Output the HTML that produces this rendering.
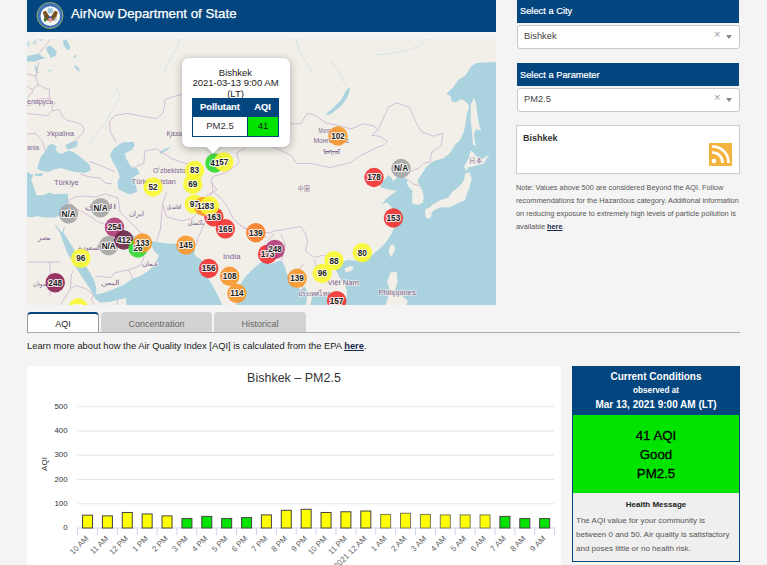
<!DOCTYPE html>
<html><head><meta charset="utf-8">
<style>
*{box-sizing:border-box;margin:0;padding:0}
html,body{width:767px;height:565px;overflow:hidden;background:#f4f4f4;font-family:"Liberation Sans",sans-serif;position:relative}
.abs{position:absolute}
#hdr{left:27px;top:0;width:469px;height:32px;background:#03467f}
#hdr .t{left:44px;top:5.5px;color:#fff;font-size:13.3px;-webkit-text-stroke:0.25px #fff;white-space:nowrap}
#map{left:27px;top:39px;width:469px;height:266px;background:#f2efe9;overflow:hidden}
.ph{left:517px;width:222px;height:23px;background:#03467f;color:#fff;font-size:9.3px;padding:6px 0 0 3px;-webkit-text-stroke:0.2px #fff}
.sel{left:517px;width:223px;height:24px;background:#fff;border:1px solid #c8c8c8;border-radius:3px;font-size:9.3px;color:#444;padding:5px 0 0 6px}
.sel .x{position:absolute;left:196px;top:2px;color:#999;font-size:11px}
.sel .ar{position:absolute;left:208px;top:8.5px;width:0;height:0;border-left:3.5px solid transparent;border-right:3.5px solid transparent;border-top:4px solid #888}
#rss{left:516px;top:125px;width:224px;height:49px;background:#fff;border:1px solid #ccc}
#note{left:516px;top:181px;width:230px;font-size:7.35px;line-height:13px;color:#555}
#note a{color:#1a2a50;font-weight:bold;text-decoration:underline}
.tab{top:312px;height:21px;border-radius:4px 4px 0 0;font-size:9px;text-align:center;padding-top:6px}
#tabline{left:27px;top:332px;width:713px;height:1px;background:#aaa}
#learn{left:27px;top:340.6px;font-size:9.35px;color:#222;white-space:nowrap}
#learn a{color:#1a2a50;text-decoration:underline;font-weight:bold}
#chart{left:27px;top:366px;width:534px;height:199px;background:#fff}
#cc{left:572px;top:366px;width:168px;height:196px;border:1px solid #03467f;border-top:none;background:#efefef}
</style></head><body>
<div id="hdr" class="abs">
  <svg class="abs" style="left:9px;top:2px" width="28" height="28" viewBox="0 0 28 28">
    <circle cx="14" cy="13.5" r="13" fill="#3f72b8" stroke="#a9b35a" stroke-width="0.9"/>
    <circle cx="14.3" cy="14" r="9.8" fill="#f8f8f4"/>
    <circle cx="14.3" cy="8.8" r="2.8" fill="#9fc6d8"/>
    <path d="M6.8 10 L9.8 8.8 L13.5 14.5 L12.8 19 L9 17.5 Z" fill="#7a4f22"/>
    <path d="M21.8 10 L18.8 8.8 L15.1 14.5 L15.8 19 L19.6 17.5 Z" fill="#7a4f22"/>
    <rect x="12.3" y="14.5" width="4" height="1.8" fill="#2f55a0"/>
    <rect x="12.3" y="16.3" width="4" height="3" fill="#ea8c90"/>
    <ellipse cx="9.2" cy="17.5" rx="1.4" ry="2.2" fill="#3d7a3a"/>
    <ellipse cx="19.5" cy="17.5" rx="1.3" ry="2" fill="#c8c8c0"/>
    <rect x="13" y="19.5" width="2.6" height="1.5" fill="#c9c9c4"/>
  </svg>
  <div class="abs t">AirNow Department of State</div>
</div>
<div id="map" class="abs"><!--MAP--><svg class="abs" style="left:0;top:0" width="469" height="266" viewBox="27 39 469 266"><path d="M27.0 56.1 L31.8 54.9 L39.0 53.7 L42.9 56.9 L46.5 58.1 L42.1 58.9 L38.2 60.1 L35.0 61.7 L30.2 61.3 L27.0 62.1Z" fill="#aad3df" /><path d="M376.0 55.0 L392.0 53.3 L407.9 50.2 L420.6 45.4 L425.4 39.0" fill="none" stroke="#aad3df" stroke-width="0.9" opacity="0.45"/><path d="M116.7 88.3 L120.9 96.7 L112.5 109.2 L106.3 121.7 L95.8 134.2 L89.6 142.6" fill="none" stroke="#aad3df" stroke-width="0.9" opacity="0.45"/><path d="M180.0 39.0 L176.0 50.0 L168.0 62.0 L164.0 72.0" fill="none" stroke="#aad3df" stroke-width="0.9" opacity="0.45"/><path d="M296.0 39.0 L300.0 52.0 L306.0 62.0 L312.0 72.0" fill="none" stroke="#aad3df" stroke-width="0.9" opacity="0.45"/><path d="M330.0 60.0 L338.0 70.0 L346.0 86.0" fill="none" stroke="#aad3df" stroke-width="0.9" opacity="0.45"/><g fill="#aad3df" opacity="0.55"><path d="M27.0 42.0 L29.0 41.0 L30.0 44.0 L28.0 47.0 L27.0 47.0Z" fill="#aad3df" /><path d="M33.0 41.0 L37.0 40.0 L36.0 44.0 L33.0 45.0Z" fill="#aad3df" /><path d="M38.0 39.0 L43.0 39.0 L41.0 42.0Z" fill="#aad3df" /></g><path d="M46.1 47.8 L49.3 45.4 L53.3 47.8 L56.9 52.5 L55.7 55.7 L52.5 56.9 L50.9 58.5 L49.3 54.9 L46.9 51.0Z" fill="#aad3df" /><path d="M62.9 40.6 L66.8 39.8 L68.4 43.8 L70.4 47.0 L68.4 50.6 L66.0 48.6 L63.7 45.4Z" fill="#aad3df" /><path d="M34.4 65.0 L36.0 65.5 L37.5 70.0 L38.5 73.0 L37.0 74.0 L35.5 71.0Z" fill="#aad3df" /><path d="M48.5 70.0 L50.5 69.5 L51.0 71.0 L49.0 71.5Z" fill="#aad3df" /><path d="M74.0 65.0 L76.5 66.0 L80.0 70.0 L79.0 71.5 L75.5 68.5Z" fill="#aad3df" /><path d="M74.0 55.0 L76.5 55.5 L76.0 57.5 L74.0 57.5Z" fill="#aad3df" /><path d="M37.6 166.5 L40.8 157.0 L45.1 151.7 L48.2 145.3 L52.5 143.7 L56.7 146.4 L55.7 150.1 L59.9 153.8 L64.2 152.7 L68.4 150.6 L72.7 151.7 L78.0 154.9 L83.3 159.6 L87.0 162.3 L90.0 166.0 L90.5 170.5 L84.4 173.0 L75.8 172.0 L69.5 170.8 L61.0 168.1 L53.5 169.7 L48.2 171.9 L40.8 170.8 L37.6 168.7Z" fill="#aad3df" /><path d="M65.2 145.3 L71.6 142.1 L78.0 141.1 L76.9 146.4 L71.6 148.5 L67.4 149.6Z" fill="#aad3df" /><path d="M34.4 174.0 L42.9 172.9 L41.9 176.1 L35.5 176.1Z" fill="#aad3df" /><path d="M27.0 172.0 L31.0 174.0 L33.4 175.0 L31.2 180.4 L33.4 185.7 L36.6 195.2 L42.9 194.9 L49.3 192.8 L54.6 194.3 L62.1 193.8 L67.9 193.8 L68.4 201.3 L67.4 207.6 L62.1 210.8 L58.9 216.1 L53.6 217.7 L42.9 217.2 L37.6 216.1 L32.3 217.2 L27.0 216.7Z" fill="#aad3df" /><path d="M109.9 154.8 L113.6 148.6 L122.3 142.4 L133.5 141.8 L134.7 144.9 L132.2 149.8 L124.8 153.6 L126.0 158.5 L131.6 167.2 L137.2 168.4 L139.7 173.4 L133.5 177.1 L135.9 185.8 L137.2 192.0 L129.8 194.5 L118.6 189.5 L117.4 182.1 L119.8 177.1 L117.4 169.7 L112.4 161.0Z" fill="#aad3df" /><path d="M64.2 225.7 L64.8 226.5 L63.5 232.7 L72.7 246.9 L78.3 256.8 L88.2 269.6 L93.9 279.5 L96.3 288.0 L96.3 294.4 L105.6 292.3 L116.1 288.1 L124.4 284.4 L131.7 279.2 L140.1 276.1 L148.4 270.9 L152.6 266.7 L157.8 258.3 L158.8 255.2 L154.7 252.1 L149.4 241.8 L152.0 241.0 L155.4 242.0 L169.1 243.4 L180.9 244.0 L194.5 247.0 L194.6 255.0 L201.5 260.1 L205.0 268.0 L208.4 279.1 L213.0 286.0 L218.8 297.5 L222.2 305.0 L126.5 305.0 L126.0 298.0 L121.3 299.1 L110.9 301.7 L100.4 302.7 L95.2 298.6 L89.7 288.0 L82.6 278.0 L75.5 266.7 L67.0 252.6 L59.9 232.7 L55.0 225.5 L55.6 224.8 L61.3 232.0 L62.5 232.0Z" fill="#aad3df" /><path d="M113.0 224.0 L120.0 226.0 L130.0 234.0 L140.0 238.0 L150.0 240.0 L152.0 244.0 L145.0 247.0 L138.0 246.0 L132.0 243.0 L125.0 238.0 L117.0 232.0 L112.0 228.0Z" fill="#aad3df" /><path d="M236.5 305.0 L238.1 291.9 L241.3 283.1 L245.3 276.7 L255.0 267.2 L260.0 263.0 L265.0 260.6 L270.0 264.2 L279.2 260.7 L282.7 261.9 L285.0 267.6 L287.3 274.5 L290.7 282.6 L296.5 287.2 L301.1 289.5 L304.8 286.5 L308.0 293.0 L306.7 299.6 L306.1 305.0Z" fill="#aad3df" /><path d="M310.6 305.0 L312.0 296.3 L317.8 294.3 L324.3 295.0 L327.6 297.0 L327.0 305.0Z" fill="#aad3df" /><path d="M496.0 62.1 L476.4 62.9 L471.6 66.1 L465.2 75.7 L458.1 80.0 L453.8 86.4 L446.4 93.8 L450.6 95.9 L451.7 101.3 L455.9 102.3 L461.3 99.1 L466.6 102.3 L469.2 106.6 L466.6 115.1 L465.5 124.6 L463.4 133.1 L460.2 140.0 L455.7 144.1 L449.3 153.7 L442.9 158.5 L436.0 160.3 L431.2 162.4 L425.9 167.7 L421.7 174.1 L417.4 180.5 L419.5 185.8 L422.7 191.1 L423.8 197.5 L422.7 202.8 L418.5 204.9 L412.1 203.8 L412.1 197.5 L412.6 191.1 L408.9 186.9 L406.8 183.7 L407.9 179.4 L403.6 177.3 L397.2 177.3 L393.0 181.5 L391.9 178.4 L388.7 175.2 L382.4 181.5 L380.2 186.9 L386.6 189.0 L397.2 191.1 L391.9 194.3 L385.6 199.6 L381.3 204.9 L386.5 202.2 L391.8 207.5 L393.2 211.5 L394.5 220.0 L394.5 227.4 L390.5 235.4 L385.0 243.4 L379.0 249.2 L372.1 255.0 L362.9 260.7 L353.7 260.7 L349.1 260.1 L343.4 261.3 L336.5 263.0 L335.9 269.9 L340.0 277.9 L344.5 283.7 L346.8 290.6 L346.8 296.3 L344.5 302.0 L343.4 305.0 L496.0 305.0Z" fill="#aad3df" /><path d="M470.8 104.4 L474.0 98.1 L476.1 103.4 L477.2 114.0 L479.3 125.7 L481.4 131.0 L476.1 128.9 L474.0 134.2 L474.5 140.0 L476.0 145.5 L473.0 145.0 L471.9 131.0 L470.8 120.4Z" fill="#f2efe9" /><path d="M470.9 150.0 L476.6 156.3 L482.3 159.2 L488.0 155.0 L490.0 153.0 L483.7 163.4 L479.4 164.8 L473.8 166.2 L468.1 167.6 L466.7 171.2 L463.9 166.2 L465.3 164.8 L468.1 159.2 L469.5 154.9Z" fill="#f2efe9" /><path d="M465.3 173.3 L469.5 172.6 L471.7 179.0 L469.5 187.5 L466.7 194.5 L465.3 200.2 L458.2 203.0 L449.7 207.3 L441.2 207.3 L434.2 210.1 L428.5 215.8 L427.1 210.1 L432.7 204.4 L439.8 200.2 L448.3 197.4 L452.6 191.7 L459.6 186.0 L463.9 180.4Z" fill="#f2efe9" /><path d="M425.7 208.7 L432.7 207.3 L431.3 215.8 L429.9 218.6 L425.7 217.2 L425.0 211.5Z" fill="#f2efe9" /><path d="M390.3 245.3 L394.3 244.5 L395.1 250.1 L391.1 257.2 L388.7 251.7Z" fill="#f2efe9" /><path d="M390.3 272.4 L396.7 271.6 L397.5 281.9 L395.1 289.9 L407.9 301.1 L406.3 305.0 L385.6 305.0 L390.3 291.5 L387.2 281.9Z" fill="#f2efe9" /><path d="M344.5 268.7 L350.3 265.9 L353.7 267.0 L351.4 271.0 L345.7 272.2Z" fill="#f2efe9" /><path d="M348.8 87.5 L350.0 89.0 L347.5 97.0 L341.5 105.5 L331.0 114.0 L326.5 115.2 L326.0 114.0 L332.0 109.0 L341.0 100.0 L346.5 90.0Z" fill="#aad3df" /><path d="M160.0 152.0 L165.0 149.0 L170.0 147.0 L169.0 149.0 L164.0 152.0 L160.0 154.0Z" fill="#aad3df" /><path d="M50.9 39.0 L45.0 46.0 L39.0 53.7" fill="none" stroke="#cfb9d2" stroke-width="0.9" stroke-linejoin="round"/><path d="M38.6 62.1 L36.9 72.4 L35.7 76.1 L27.0 73.6" fill="none" stroke="#cfb9d2" stroke-width="0.9" stroke-linejoin="round"/><path d="M35.7 76.1 L38.2 84.8 L32.0 89.7 L27.0 86.0" fill="none" stroke="#cfb9d2" stroke-width="0.9" stroke-linejoin="round"/><path d="M38.2 84.8 L43.1 87.3 L49.3 89.7 L49.3 96.0 L51.2 100.9 L55.5 103.4 L51.8 105.8 L52.4 110.8 L59.2 109.6 L62.9 117.0 L67.9 120.7 L74.1 122.0 L81.5 124.4 L84.0 129.4 L83.3 132.1 L77.1 138.4 L72.9 142.6 L70.0 146.0" fill="none" stroke="#cfb9d2" stroke-width="0.9" stroke-linejoin="round"/><path d="M27.0 113.3 L36.9 114.5 L47.4 115.8 L51.8 110.8" fill="none" stroke="#cfb9d2" stroke-width="0.9" stroke-linejoin="round"/><path d="M32.0 89.7 L32.6 92.2 L28.9 95.9 L27.0 98.0" fill="none" stroke="#cfb9d2" stroke-width="0.9" stroke-linejoin="round"/><path d="M27.0 134.2 L35.3 133.2 L41.6 140.5 L43.7 144.7 L45.0 151.0" fill="none" stroke="#cfb9d2" stroke-width="0.9" stroke-linejoin="round"/><path d="M27.0 106.0 L33.0 104.0 L36.0 100.0 L40.0 98.8 L50.0 98.8" fill="none" stroke="#cfb9d2" stroke-width="0.9" stroke-linejoin="round"/><path d="M116.7 142.6 L110.4 132.1 L109.4 121.7 L114.6 115.5 L127.1 113.4 L143.8 116.5 L156.3 118.6 L162.6 113.4 L164.7 105.0 L164.7 99.8 L173.0 96.7 L181.4 94.6 L183.0 94.0" fill="none" stroke="#cfb9d2" stroke-width="0.9" stroke-linejoin="round"/><path d="M133.4 167.6 L143.8 163.4 L144.9 150.9 L156.3 148.8 L173.0 159.3 L185.5 163.4 L195.0 165.0" fill="none" stroke="#cfb9d2" stroke-width="0.9" stroke-linejoin="round"/><path d="M89.6 161.4 L100.0 165.5 L110.4 169.7 L114.6 171.8" fill="none" stroke="#cfb9d2" stroke-width="0.9" stroke-linejoin="round"/><path d="M80.0 174.0 L90.0 177.0 L100.0 178.0 L105.0 183.0 L112.0 184.0" fill="none" stroke="#cfb9d2" stroke-width="0.9" stroke-linejoin="round"/><path d="M67.9 201.0 L75.0 197.0 L85.0 196.0 L95.0 197.0 L105.0 194.0 L112.0 196.0 L118.0 198.0" fill="none" stroke="#cfb9d2" stroke-width="0.9" stroke-linejoin="round"/><path d="M68.4 201.3 L75.0 208.0 L88.0 215.0 L98.0 222.0 L110.0 226.0" fill="none" stroke="#cfb9d2" stroke-width="0.9" stroke-linejoin="round"/><path d="M27.0 262.0 L60.0 262.0" fill="none" stroke="#cfb9d2" stroke-width="0.9" stroke-linejoin="round"/><path d="M50.0 262.0 L50.0 296.0" fill="none" stroke="#cfb9d2" stroke-width="0.9" stroke-linejoin="round"/><path d="M61.0 304.4 L70.4 288.8 L75.6 285.6 L86.1 288.8 L93.4 295.0 L91.3 299.2 L94.4 304.4" fill="none" stroke="#cfb9d2" stroke-width="0.9" stroke-linejoin="round"/><path d="M70.4 288.8 L71.5 274.2 L74.0 270.0" fill="none" stroke="#cfb9d2" stroke-width="0.9" stroke-linejoin="round"/><path d="M117.4 300.2 L117.4 305.0" fill="none" stroke="#cfb9d2" stroke-width="0.9" stroke-linejoin="round"/><path d="M245.6 147.8 L236.5 153.0 L239.1 162.2 L235.2 166.1 L226.1 172.6 L213.0 176.5 L210.4 181.7 L217.0 189.5 L207.8 194.8 L203.0 200.0" fill="none" stroke="#cfb9d2" stroke-width="0.9" stroke-linejoin="round"/><path d="M212.6 181.3 L212.6 191.7 L220.9 198.0 L227.2 206.3 L233.4 218.8 L236.6 222.0 L243.3 227.6 L252.1 230.9 L263.2 232.0 L269.8 233.1 L274.3 230.9 L283.1 229.8 L294.2 227.6 L300.8 226.5 L305.3 233.1 L307.5 242.0 L305.3 250.8 L314.1 257.5 L323.0 255.3 L332.0 258.0 L337.0 262.0" fill="none" stroke="#cfb9d2" stroke-width="0.9" stroke-linejoin="round"/><path d="M239.7 225.1 L254.3 233.4 L266.8 237.6" fill="none" stroke="#cfb9d2" stroke-width="0.9" stroke-linejoin="round"/><path d="M166.7 191.7 L162.5 204.2 L166.7 216.8 L181.3 220.9 L191.7 218.8 L202.1 208.4 L212.6 191.7" fill="none" stroke="#cfb9d2" stroke-width="0.9" stroke-linejoin="round"/><path d="M162.5 204.2 L160.4 229.3 L156.3 241.8" fill="none" stroke="#cfb9d2" stroke-width="0.9" stroke-linejoin="round"/><path d="M206.3 218.8 L202.1 229.3 L198.0 237.6 L195.9 246.0" fill="none" stroke="#cfb9d2" stroke-width="0.9" stroke-linejoin="round"/><path d="M290.4 123.8 L300.9 123.8 L307.1 113.4 L313.4 114.4 L319.6 118.6 L325.9 122.8 L340.5 125.9 L350.9 129.0 L363.4 123.8 L373.9 125.9 L378.0 130.1 L371.8 135.3 L380.1 136.3 L387.4 141.5" fill="none" stroke="#cfb9d2" stroke-width="0.9" stroke-linejoin="round"/><path d="M270.0 146.0 L275.6 147.8 L291.3 155.6 L296.5 163.5 L311.3 163.4 L330.1 167.6 L350.9 162.4 L361.4 155.1 L373.9 148.8 L384.3 144.7 L387.4 141.5" fill="none" stroke="#cfb9d2" stroke-width="0.9" stroke-linejoin="round"/><path d="M378.0 130.1 L388.5 107.1 L396.8 102.9 L409.3 107.1 L415.6 121.7 L421.8 132.1 L434.4 136.3 L442.9 133.0 L441.3 145.7 L431.8 152.1 L430.2 161.7 L423.8 163.2 L419.0 168.0 L407.9 172.8 L399.9 177.6" fill="none" stroke="#cfb9d2" stroke-width="0.9" stroke-linejoin="round"/><path d="M407.9 179.4 L413.0 184.0 L419.5 185.8" fill="none" stroke="#cfb9d2" stroke-width="0.9" stroke-linejoin="round"/><path d="M290.0 100.0 L282.0 110.0 L285.0 123.0 L290.4 123.8" fill="none" stroke="#cfb9d2" stroke-width="0.9" stroke-linejoin="round"/><path d="M266.5 242.0 L271.0 237.6 L274.3 234.0" fill="none" stroke="#cfb9d2" stroke-width="0.9" stroke-linejoin="round"/><path d="M280.9 234.2 L285.3 244.2 L283.1 255.3 L280.9 262.0" fill="none" stroke="#cfb9d2" stroke-width="0.9" stroke-linejoin="round"/><path d="M303.1 264.1 L296.4 273.0 L300.8 284.0 L304.0 290.0" fill="none" stroke="#cfb9d2" stroke-width="0.9" stroke-linejoin="round"/><path d="M314.1 259.7 L318.6 273.0 L329.6 284.0 L338.0 282.0" fill="none" stroke="#cfb9d2" stroke-width="0.9" stroke-linejoin="round"/><path d="M150.0 241.0 L140.0 232.0 L130.0 222.0 L120.0 212.0 L118.0 198.0" fill="none" stroke="#cfb9d2" stroke-width="0.9" stroke-linejoin="round"/><path d="M144.2 256.3 L140.0 252.0 L135.0 248.0 L130.0 246.0" fill="none" stroke="#cfb9d2" stroke-width="0.9" stroke-linejoin="round"/><path d="M95.2 276.1 L110.9 277.6 L114.0 273.0 L128.6 269.8 L140.0 265.6 L143.2 259.4 L144.2 256.3" fill="none" stroke="#cfb9d2" stroke-width="0.9" stroke-linejoin="round"/><path d="M128.6 269.8 L132.8 278.2" fill="none" stroke="#cfb9d2" stroke-width="0.9" stroke-linejoin="round"/><text x="27" y="103.6" textLength="26.3" lengthAdjust="spacingAndGlyphs" font-size="7" fill="#806690" stroke="#f2efe9" stroke-width="1.5" paint-order="stroke" stroke-opacity="0.8">еларусь</text><text x="46.7" y="136.1" textLength="27.3" lengthAdjust="spacingAndGlyphs" font-size="7" fill="#806690" stroke="#f2efe9" stroke-width="1.5" paint-order="stroke" stroke-opacity="0.8">Україна</text><text x="27" y="149.5" textLength="12.0" lengthAdjust="spacingAndGlyphs" font-size="7" fill="#806690" stroke="#f2efe9" stroke-width="1.5" paint-order="stroke" stroke-opacity="0.8">ania</text><text x="54" y="185.0" textLength="24.8" lengthAdjust="spacingAndGlyphs" font-size="7" fill="#806690" stroke="#f2efe9" stroke-width="1.5" paint-order="stroke" stroke-opacity="0.8">Türkiye</text><text x="131.8" y="184.4" textLength="44.0" lengthAdjust="spacingAndGlyphs" font-size="7" fill="#806690" stroke="#f2efe9" stroke-width="1.5" paint-order="stroke" stroke-opacity="0.8">Türkmenistan</text><text x="153" y="173.2" textLength="36.5" lengthAdjust="spacingAndGlyphs" font-size="7" fill="#806690" stroke="#f2efe9" stroke-width="1.5" paint-order="stroke" stroke-opacity="0.8">Oʻzbekiston</text><text x="128.8" y="215.7" textLength="15.2" lengthAdjust="spacingAndGlyphs" font-size="7" fill="#806690" stroke="#f2efe9" stroke-width="1.5" paint-order="stroke" stroke-opacity="0.8">ایران</text><text x="84.7" y="208.7" textLength="31.9" lengthAdjust="spacingAndGlyphs" font-size="7" fill="#806690" stroke="#f2efe9" stroke-width="1.5" paint-order="stroke" stroke-opacity="0.8">العراق</text><text x="37.6" y="240.0" textLength="13.7" lengthAdjust="spacingAndGlyphs" font-size="7" fill="#806690" stroke="#f2efe9" stroke-width="1.5" paint-order="stroke" stroke-opacity="0.8">مصر</text><text x="78" y="250.3" textLength="22.0" lengthAdjust="spacingAndGlyphs" font-size="7" fill="#806690" stroke="#f2efe9" stroke-width="1.5" paint-order="stroke" stroke-opacity="0.8">السعودية</text><text x="142.4" y="266.4" textLength="15.2" lengthAdjust="spacingAndGlyphs" font-size="7" fill="#806690" stroke="#f2efe9" stroke-width="1.5" paint-order="stroke" stroke-opacity="0.8">عمان</text><text x="101.4" y="285.2" textLength="18.2" lengthAdjust="spacingAndGlyphs" font-size="7" fill="#806690" stroke="#f2efe9" stroke-width="1.5" paint-order="stroke" stroke-opacity="0.8">اليمن</text><text x="33" y="286.2" textLength="16.8" lengthAdjust="spacingAndGlyphs" font-size="7" fill="#806690" stroke="#f2efe9" stroke-width="1.5" paint-order="stroke" stroke-opacity="0.8">السودان</text><text x="166.7" y="208.8" textLength="14.6" lengthAdjust="spacingAndGlyphs" font-size="7" fill="#806690" stroke="#f2efe9" stroke-width="1.5" paint-order="stroke" stroke-opacity="0.8">افغانستان</text><text x="187.5" y="224.5" textLength="16.7" lengthAdjust="spacingAndGlyphs" font-size="7" fill="#806690" stroke="#f2efe9" stroke-width="1.5" paint-order="stroke" stroke-opacity="0.8">پاکستان</text><text x="298" y="191.1" textLength="12.0" lengthAdjust="spacingAndGlyphs" font-size="7" fill="#806690" stroke="#f2efe9" stroke-width="1.5" paint-order="stroke" stroke-opacity="0.8">中国</text><text x="222.9" y="258.6" textLength="17.6" lengthAdjust="spacingAndGlyphs" font-size="7" fill="#806690" stroke="#f2efe9" stroke-width="1.5" paint-order="stroke" stroke-opacity="0.8">India</text><text x="318.6" y="132.5" textLength="19.4" lengthAdjust="spacingAndGlyphs" font-size="7" fill="#806690" stroke="#f2efe9" stroke-width="1.5" paint-order="stroke" stroke-opacity="0.8">Mongolia</text><text x="313.4" y="143.0" textLength="35.4" lengthAdjust="spacingAndGlyphs" font-size="7" fill="#806690" stroke="#f2efe9" stroke-width="1.5" paint-order="stroke" stroke-opacity="0.8">Монгол улс</text><text x="322.8" y="153.5" textLength="17.7" lengthAdjust="spacingAndGlyphs" font-size="7" fill="#806690" stroke="#f2efe9" stroke-width="1.5" paint-order="stroke" stroke-opacity="0.8">ᠮᠣᠩᠭᠣᠯ</text><text x="469.2" y="163.4" textLength="12.8" lengthAdjust="spacingAndGlyphs" font-size="7" fill="#806690" stroke="#f2efe9" stroke-width="1.5" paint-order="stroke" stroke-opacity="0.8">日本</text><text x="327.6" y="285.1" textLength="31.3" lengthAdjust="spacingAndGlyphs" font-size="7" fill="#806690" stroke="#f2efe9" stroke-width="1.5" paint-order="stroke" stroke-opacity="0.8">Việt Nam</text><text x="378.4" y="295.1" textLength="37.4" lengthAdjust="spacingAndGlyphs" font-size="7" fill="#806690" stroke="#f2efe9" stroke-width="1.5" paint-order="stroke" stroke-opacity="0.8">Philippines</text><text x="298.4" y="295.7" textLength="32.3" lengthAdjust="spacingAndGlyphs" font-size="7" fill="#806690" stroke="#f2efe9" stroke-width="1.5" paint-order="stroke" stroke-opacity="0.8">ประเทศไทย</text><text x="166.6" y="136.4" textLength="33.4" lengthAdjust="spacingAndGlyphs" font-size="7" fill="#806690" stroke="#f2efe9" stroke-width="1.5" paint-order="stroke" stroke-opacity="0.8">Қазақстан</text><circle cx="55.2" cy="282.7" r="9.7" fill="#8e1f52" fill-opacity="0.9"/><circle cx="78.2" cy="308" r="9.7" fill="#f8f830" fill-opacity="0.9"/><circle cx="68.6" cy="213.8" r="9.7" fill="#a5a5a5" fill-opacity="0.9"/><circle cx="100.5" cy="207.7" r="9.7" fill="#a5a5a5" fill-opacity="0.9"/><circle cx="114.5" cy="227.3" r="9.7" fill="#b03a78" fill-opacity="0.9"/><circle cx="108.7" cy="245.7" r="9.7" fill="#a5a5a5" fill-opacity="0.9"/><circle cx="123.8" cy="240" r="9.7" fill="#6e2848" fill-opacity="0.9"/><circle cx="138" cy="248" r="9.7" fill="#30d830" fill-opacity="0.9"/><circle cx="142.5" cy="243" r="9.7" fill="#f7962a" fill-opacity="0.9"/><circle cx="80.8" cy="258.4" r="9.7" fill="#f8f830" fill-opacity="0.9"/><circle cx="153.1" cy="187" r="9.7" fill="#f8f830" fill-opacity="0.9"/><circle cx="185.9" cy="245.1" r="9.7" fill="#f7962a" fill-opacity="0.9"/><circle cx="208.7" cy="268.5" r="9.7" fill="#f03030" fill-opacity="0.9"/><circle cx="229.7" cy="276.3" r="9.7" fill="#f7962a" fill-opacity="0.9"/><circle cx="236.9" cy="293.5" r="9.7" fill="#f7962a" fill-opacity="0.9"/><circle cx="214.9" cy="163" r="9.7" fill="#30d830" fill-opacity="0.9"/><circle cx="223.8" cy="161.9" r="9.7" fill="#f8f830" fill-opacity="0.9"/><circle cx="194.6" cy="170.5" r="9.7" fill="#f8f830" fill-opacity="0.9"/><circle cx="192.7" cy="184.2" r="9.7" fill="#f8f830" fill-opacity="0.9"/><circle cx="225.4" cy="228.8" r="9.7" fill="#f03030" fill-opacity="0.9"/><circle cx="213.9" cy="216.8" r="9.7" fill="#f03030" fill-opacity="0.9"/><circle cx="194.3" cy="204.1" r="9.7" fill="#f8f830" fill-opacity="0.9"/><circle cx="203.9" cy="206.5" r="9.7" fill="#f7962a" fill-opacity="0.9"/><circle cx="209.4" cy="206" r="9.7" fill="#f8f830" fill-opacity="0.9"/><circle cx="255.8" cy="232.7" r="9.7" fill="#f77a22" fill-opacity="0.9"/><circle cx="267.6" cy="254.2" r="9.7" fill="#f03030" fill-opacity="0.9"/><circle cx="275" cy="249.4" r="9.7" fill="#b03a78" fill-opacity="0.9"/><circle cx="297.1" cy="278.3" r="9.7" fill="#f7962a" fill-opacity="0.9"/><circle cx="322.2" cy="273.5" r="9.7" fill="#f8f830" fill-opacity="0.9"/><circle cx="334" cy="260.6" r="9.7" fill="#f8f830" fill-opacity="0.9"/><circle cx="362.3" cy="252.6" r="9.7" fill="#f8f830" fill-opacity="0.9"/><circle cx="336.6" cy="300.7" r="9.7" fill="#f03030" fill-opacity="0.9"/><circle cx="338" cy="136" r="9.7" fill="#f7962a" fill-opacity="0.9"/><circle cx="374" cy="177.5" r="9.7" fill="#f03030" fill-opacity="0.9"/><circle cx="401" cy="168.5" r="9.7" fill="#a5a5a5" fill-opacity="0.9"/><circle cx="393.4" cy="218" r="9.7" fill="#f03030" fill-opacity="0.9"/><text x="55.2" y="285.6" text-anchor="middle" font-size="8.2" font-weight="bold" fill="#222" stroke="#fff" stroke-width="2.2" stroke-linejoin="round" paint-order="stroke" stroke-opacity="0.85">248</text><text x="78.2" y="310.9" text-anchor="middle" font-size="8.2" font-weight="bold" fill="#222" stroke="#fff" stroke-width="2.2" stroke-linejoin="round" paint-order="stroke" stroke-opacity="0.85">96</text><text x="68.6" y="216.7" text-anchor="middle" font-size="8.2" font-weight="bold" fill="#222" stroke="#fff" stroke-width="2.2" stroke-linejoin="round" paint-order="stroke" stroke-opacity="0.85">N/A</text><text x="100.5" y="210.6" text-anchor="middle" font-size="8.2" font-weight="bold" fill="#222" stroke="#fff" stroke-width="2.2" stroke-linejoin="round" paint-order="stroke" stroke-opacity="0.85">N/A</text><text x="114.5" y="230.2" text-anchor="middle" font-size="8.2" font-weight="bold" fill="#222" stroke="#fff" stroke-width="2.2" stroke-linejoin="round" paint-order="stroke" stroke-opacity="0.85">254</text><text x="108.7" y="248.6" text-anchor="middle" font-size="8.2" font-weight="bold" fill="#222" stroke="#fff" stroke-width="2.2" stroke-linejoin="round" paint-order="stroke" stroke-opacity="0.85">N/A</text><text x="123.8" y="242.9" text-anchor="middle" font-size="8.2" font-weight="bold" fill="#222" stroke="#fff" stroke-width="2.2" stroke-linejoin="round" paint-order="stroke" stroke-opacity="0.85">412</text><text x="138" y="250.9" text-anchor="middle" font-size="8.2" font-weight="bold" fill="#222" stroke="#fff" stroke-width="2.2" stroke-linejoin="round" paint-order="stroke" stroke-opacity="0.85">26</text><text x="142.5" y="245.9" text-anchor="middle" font-size="8.2" font-weight="bold" fill="#222" stroke="#fff" stroke-width="2.2" stroke-linejoin="round" paint-order="stroke" stroke-opacity="0.85">133</text><text x="80.8" y="261.3" text-anchor="middle" font-size="8.2" font-weight="bold" fill="#222" stroke="#fff" stroke-width="2.2" stroke-linejoin="round" paint-order="stroke" stroke-opacity="0.85">96</text><text x="153.1" y="189.9" text-anchor="middle" font-size="8.2" font-weight="bold" fill="#222" stroke="#fff" stroke-width="2.2" stroke-linejoin="round" paint-order="stroke" stroke-opacity="0.85">52</text><text x="185.9" y="248.0" text-anchor="middle" font-size="8.2" font-weight="bold" fill="#222" stroke="#fff" stroke-width="2.2" stroke-linejoin="round" paint-order="stroke" stroke-opacity="0.85">145</text><text x="208.7" y="271.4" text-anchor="middle" font-size="8.2" font-weight="bold" fill="#222" stroke="#fff" stroke-width="2.2" stroke-linejoin="round" paint-order="stroke" stroke-opacity="0.85">156</text><text x="229.7" y="279.2" text-anchor="middle" font-size="8.2" font-weight="bold" fill="#222" stroke="#fff" stroke-width="2.2" stroke-linejoin="round" paint-order="stroke" stroke-opacity="0.85">108</text><text x="236.9" y="296.4" text-anchor="middle" font-size="8.2" font-weight="bold" fill="#222" stroke="#fff" stroke-width="2.2" stroke-linejoin="round" paint-order="stroke" stroke-opacity="0.85">114</text><text x="214.9" y="165.9" text-anchor="middle" font-size="8.2" font-weight="bold" fill="#222" stroke="#fff" stroke-width="2.2" stroke-linejoin="round" paint-order="stroke" stroke-opacity="0.85">41</text><text x="223.8" y="164.8" text-anchor="middle" font-size="8.2" font-weight="bold" fill="#222" stroke="#fff" stroke-width="2.2" stroke-linejoin="round" paint-order="stroke" stroke-opacity="0.85">57</text><text x="194.6" y="173.4" text-anchor="middle" font-size="8.2" font-weight="bold" fill="#222" stroke="#fff" stroke-width="2.2" stroke-linejoin="round" paint-order="stroke" stroke-opacity="0.85">83</text><text x="192.7" y="187.1" text-anchor="middle" font-size="8.2" font-weight="bold" fill="#222" stroke="#fff" stroke-width="2.2" stroke-linejoin="round" paint-order="stroke" stroke-opacity="0.85">69</text><text x="225.4" y="231.7" text-anchor="middle" font-size="8.2" font-weight="bold" fill="#222" stroke="#fff" stroke-width="2.2" stroke-linejoin="round" paint-order="stroke" stroke-opacity="0.85">165</text><text x="213.9" y="219.7" text-anchor="middle" font-size="8.2" font-weight="bold" fill="#222" stroke="#fff" stroke-width="2.2" stroke-linejoin="round" paint-order="stroke" stroke-opacity="0.85">163</text><text x="194.3" y="207.0" text-anchor="middle" font-size="8.2" font-weight="bold" fill="#222" stroke="#fff" stroke-width="2.2" stroke-linejoin="round" paint-order="stroke" stroke-opacity="0.85">97</text><text x="203.9" y="209.4" text-anchor="middle" font-size="8.2" font-weight="bold" fill="#222" stroke="#fff" stroke-width="2.2" stroke-linejoin="round" paint-order="stroke" stroke-opacity="0.85">123</text><text x="209.4" y="208.9" text-anchor="middle" font-size="8.2" font-weight="bold" fill="#222" stroke="#fff" stroke-width="2.2" stroke-linejoin="round" paint-order="stroke" stroke-opacity="0.85">83</text><text x="255.8" y="235.6" text-anchor="middle" font-size="8.2" font-weight="bold" fill="#222" stroke="#fff" stroke-width="2.2" stroke-linejoin="round" paint-order="stroke" stroke-opacity="0.85">139</text><text x="267.6" y="257.1" text-anchor="middle" font-size="8.2" font-weight="bold" fill="#222" stroke="#fff" stroke-width="2.2" stroke-linejoin="round" paint-order="stroke" stroke-opacity="0.85">173</text><text x="275" y="252.3" text-anchor="middle" font-size="8.2" font-weight="bold" fill="#222" stroke="#fff" stroke-width="2.2" stroke-linejoin="round" paint-order="stroke" stroke-opacity="0.85">248</text><text x="297.1" y="281.2" text-anchor="middle" font-size="8.2" font-weight="bold" fill="#222" stroke="#fff" stroke-width="2.2" stroke-linejoin="round" paint-order="stroke" stroke-opacity="0.85">139</text><text x="322.2" y="276.4" text-anchor="middle" font-size="8.2" font-weight="bold" fill="#222" stroke="#fff" stroke-width="2.2" stroke-linejoin="round" paint-order="stroke" stroke-opacity="0.85">96</text><text x="334" y="263.5" text-anchor="middle" font-size="8.2" font-weight="bold" fill="#222" stroke="#fff" stroke-width="2.2" stroke-linejoin="round" paint-order="stroke" stroke-opacity="0.85">88</text><text x="362.3" y="255.5" text-anchor="middle" font-size="8.2" font-weight="bold" fill="#222" stroke="#fff" stroke-width="2.2" stroke-linejoin="round" paint-order="stroke" stroke-opacity="0.85">80</text><text x="336.6" y="303.6" text-anchor="middle" font-size="8.2" font-weight="bold" fill="#222" stroke="#fff" stroke-width="2.2" stroke-linejoin="round" paint-order="stroke" stroke-opacity="0.85">157</text><text x="338" y="138.9" text-anchor="middle" font-size="8.2" font-weight="bold" fill="#222" stroke="#fff" stroke-width="2.2" stroke-linejoin="round" paint-order="stroke" stroke-opacity="0.85">102</text><text x="374" y="180.4" text-anchor="middle" font-size="8.2" font-weight="bold" fill="#222" stroke="#fff" stroke-width="2.2" stroke-linejoin="round" paint-order="stroke" stroke-opacity="0.85">178</text><text x="401" y="171.4" text-anchor="middle" font-size="8.2" font-weight="bold" fill="#222" stroke="#fff" stroke-width="2.2" stroke-linejoin="round" paint-order="stroke" stroke-opacity="0.85">N/A</text><text x="393.4" y="220.9" text-anchor="middle" font-size="8.2" font-weight="bold" fill="#222" stroke="#fff" stroke-width="2.2" stroke-linejoin="round" paint-order="stroke" stroke-opacity="0.85">153</text></svg><!--/MAP--></div>
<div id="popup" class="abs" style="left:181.5px;top:57.5px;width:108px;height:89px;background:#fff;border-radius:7px;box-shadow:0 2px 8px rgba(0,0,0,0.3);font-size:9.5px;color:#222;text-align:center;line-height:10.5px">
  <div class="abs" style="left:0;top:10px;width:108px">Bishkek<br>2021-03-13 9:00 AM<br>(LT)</div>
  <div class="abs" style="left:10.5px;top:40.5px;width:87px;height:39px;border:1px solid #03467f;background:#fff">
    <div class="abs" style="left:0;top:0;width:85px;height:18px;background:#03467f"></div>
    <div class="abs" style="left:0;top:3px;width:54px;color:#fff;font-weight:bold;font-size:9.3px;-webkit-text-stroke:0.15px #fff">Pollutant</div>
    <div class="abs" style="left:54px;top:3px;width:31px;color:#fff;font-weight:bold;font-size:9.3px;-webkit-text-stroke:0.15px #fff">AQI</div>
    <div class="abs" style="left:54px;top:18px;width:1px;height:19px;background:#03467f"></div>
    <div class="abs" style="left:55px;top:18px;width:30px;height:19px;background:#00e400"></div>
    <div class="abs" style="left:0;top:22px;width:54px;font-size:9.5px;color:#333">PM2.5</div>
    <div class="abs" style="left:55px;top:22px;width:30px;font-size:9.5px;color:#111">41</div>
  </div>
</div>
<div class="abs" style="left:207.5px;top:140px;width:12px;height:12px;background:#fff;transform:rotate(45deg) scale(0.75,1);box-shadow:2px 2px 4px rgba(0,0,0,0.15)"></div>
<div class="abs" style="left:200px;top:138.5px;width:30px;height:7.5px;background:#fff"></div>


<div class="abs ph" style="top:0">Select a City</div>
<div class="abs sel" style="top:25px">Bishkek<span class="x">×</span><span class="ar"></span></div>
<div class="abs ph" style="top:63px;padding-top:7px">Select a Parameter</div>
<div class="abs sel" style="top:88px">PM2.5<span class="x">×</span><span class="ar"></span></div>
<div id="rss" class="abs">
  <div class="abs" style="left:6px;top:7px;font-size:9px;font-weight:bold;color:#333">Bishkek</div>
  <svg class="abs" style="left:192px;top:17px" width="23" height="23" viewBox="0 0 23 23">
    <rect width="23" height="23" fill="#f2b33f"/>
    <circle cx="5" cy="18" r="2.3" fill="#fff"/>
    <path d="M3 9.5 A10 10 0 0 1 13.5 20" stroke="#fff" stroke-width="2.6" fill="none"/>
    <path d="M3 3.5 A16 16 0 0 1 19.5 20" stroke="#fff" stroke-width="2.6" fill="none"/>
  </svg>
</div>
<div id="note" class="abs">Note: Values above 500 are considered Beyond the AQI. Follow recommendations for the Hazardous category. Additional information on reducing exposure to extremely high levels of particle pollution is available <a>here</a>.</div>

<div class="abs tab" style="left:27px;width:72px;background:#fff;border:1px solid #999;border-top:2px solid #03467f;border-bottom:none;color:#222;padding-top:5px">AQI</div>
<div class="abs tab" style="left:101px;width:111px;background:#d3d3d3;color:#666;padding-top:7px">Concentration</div>
<div class="abs tab" style="left:214px;width:92px;background:#d3d3d3;color:#666;padding-top:7px">Historical</div>
<div id="tabline" class="abs"></div>
<div id="learn" class="abs">Learn more about how the Air Quality Index [AQI] is calculated from the EPA <a>here</a>.</div>

<div id="chart" class="abs"><svg class="abs" style="left:0;top:0" width="534" height="199" viewBox="27 366 534 199">
<text x="294" y="382" text-anchor="middle" font-size="12.5" fill="#333">Bishkek – PM2.5</text>
<rect x="77.6" y="503.24" width="476.4" height="1" fill="#e6e6e6"/>
<text x="67.5" y="505.84" text-anchor="end" font-size="7.8" fill="#333">100</text>
<rect x="77.6" y="478.98" width="476.4" height="1" fill="#e6e6e6"/>
<text x="67.5" y="481.58" text-anchor="end" font-size="7.8" fill="#333">200</text>
<rect x="77.6" y="454.72" width="476.4" height="1" fill="#e6e6e6"/>
<text x="67.5" y="457.32" text-anchor="end" font-size="7.8" fill="#333">300</text>
<rect x="77.6" y="430.46" width="476.4" height="1" fill="#e6e6e6"/>
<text x="67.5" y="433.06" text-anchor="end" font-size="7.8" fill="#333">400</text>
<rect x="77.6" y="406.20" width="476.4" height="1" fill="#e6e6e6"/>
<text x="67.5" y="408.80" text-anchor="end" font-size="7.8" fill="#333">500</text>
<text x="67.5" y="530.10" text-anchor="end" font-size="7.8" fill="#333">0</text>
<text transform="translate(47.3,464) rotate(-90)" text-anchor="middle" font-size="8" fill="#333">AQI</text>
<rect x="77.6" y="527.5" width="477" height="1" fill="#ccd6eb"/>
<rect x="77.10" y="528" width="1" height="7" fill="#ccd6eb"/>
<rect x="96.97" y="528" width="1" height="7" fill="#ccd6eb"/>
<rect x="116.85" y="528" width="1" height="7" fill="#ccd6eb"/>
<rect x="136.72" y="528" width="1" height="7" fill="#ccd6eb"/>
<rect x="156.60" y="528" width="1" height="7" fill="#ccd6eb"/>
<rect x="176.47" y="528" width="1" height="7" fill="#ccd6eb"/>
<rect x="196.35" y="528" width="1" height="7" fill="#ccd6eb"/>
<rect x="216.22" y="528" width="1" height="7" fill="#ccd6eb"/>
<rect x="236.10" y="528" width="1" height="7" fill="#ccd6eb"/>
<rect x="255.98" y="528" width="1" height="7" fill="#ccd6eb"/>
<rect x="275.85" y="528" width="1" height="7" fill="#ccd6eb"/>
<rect x="295.73" y="528" width="1" height="7" fill="#ccd6eb"/>
<rect x="315.60" y="528" width="1" height="7" fill="#ccd6eb"/>
<rect x="335.48" y="528" width="1" height="7" fill="#ccd6eb"/>
<rect x="355.35" y="528" width="1" height="7" fill="#ccd6eb"/>
<rect x="375.23" y="528" width="1" height="7" fill="#ccd6eb"/>
<rect x="395.10" y="528" width="1" height="7" fill="#ccd6eb"/>
<rect x="414.98" y="528" width="1" height="7" fill="#ccd6eb"/>
<rect x="434.85" y="528" width="1" height="7" fill="#ccd6eb"/>
<rect x="454.73" y="528" width="1" height="7" fill="#ccd6eb"/>
<rect x="474.60" y="528" width="1" height="7" fill="#ccd6eb"/>
<rect x="494.48" y="528" width="1" height="7" fill="#ccd6eb"/>
<rect x="514.35" y="528" width="1" height="7" fill="#ccd6eb"/>
<rect x="534.23" y="528" width="1" height="7" fill="#ccd6eb"/>
<rect x="554.10" y="528" width="1" height="7" fill="#ccd6eb"/>
<rect x="82.54" y="515.16" width="10" height="12.84" fill="#ffff00" stroke="#444" stroke-width="1"/>
<rect x="102.41" y="515.88" width="10" height="12.12" fill="#ffff00" stroke="#444" stroke-width="1"/>
<rect x="122.29" y="512.49" width="10" height="15.51" fill="#ffff00" stroke="#444" stroke-width="1"/>
<rect x="142.16" y="513.94" width="10" height="14.06" fill="#ffff00" stroke="#444" stroke-width="1"/>
<rect x="162.04" y="515.88" width="10" height="12.12" fill="#ffff00" stroke="#444" stroke-width="1"/>
<rect x="181.91" y="518.55" width="10" height="9.45" fill="#00e400" stroke="#444" stroke-width="1"/>
<rect x="201.79" y="516.37" width="10" height="11.63" fill="#00e400" stroke="#444" stroke-width="1"/>
<rect x="221.66" y="518.55" width="10" height="9.45" fill="#00e400" stroke="#444" stroke-width="1"/>
<rect x="241.54" y="517.58" width="10" height="10.42" fill="#00e400" stroke="#444" stroke-width="1"/>
<rect x="261.41" y="514.91" width="10" height="13.09" fill="#ffff00" stroke="#444" stroke-width="1"/>
<rect x="281.29" y="510.31" width="10" height="17.70" fill="#ffff00" stroke="#444" stroke-width="1"/>
<rect x="301.16" y="509.33" width="10" height="18.67" fill="#ffff00" stroke="#444" stroke-width="1"/>
<rect x="321.04" y="512.49" width="10" height="15.51" fill="#ffff00" stroke="#444" stroke-width="1"/>
<rect x="340.91" y="511.76" width="10" height="16.24" fill="#ffff00" stroke="#444" stroke-width="1"/>
<rect x="360.79" y="511.03" width="10" height="16.97" fill="#ffff00" stroke="#444" stroke-width="1"/>
<rect x="380.66" y="514.43" width="10" height="13.57" fill="#ffff00" stroke="#7a7a5a" stroke-width="1"/>
<rect x="400.54" y="513.22" width="10" height="14.78" fill="#ffff00" stroke="#7a7a5a" stroke-width="1"/>
<rect x="420.41" y="514.43" width="10" height="13.57" fill="#ffff00" stroke="#7a7a5a" stroke-width="1"/>
<rect x="440.29" y="514.91" width="10" height="13.09" fill="#ffff00" stroke="#7a7a5a" stroke-width="1"/>
<rect x="460.16" y="514.91" width="10" height="13.09" fill="#ffff00" stroke="#7a7a5a" stroke-width="1"/>
<rect x="480.04" y="514.91" width="10" height="13.09" fill="#ffff00" stroke="#7a7a5a" stroke-width="1"/>
<rect x="499.91" y="516.37" width="10" height="11.63" fill="#00e400" stroke="#444" stroke-width="1"/>
<rect x="519.79" y="518.55" width="10" height="9.45" fill="#00e400" stroke="#444" stroke-width="1"/>
<rect x="539.66" y="518.55" width="10" height="9.45" fill="#00e400" stroke="#444" stroke-width="1"/>
<text transform="translate(89.04,539) rotate(-45)" text-anchor="end" font-size="8" fill="#666">10 AM</text>
<text transform="translate(108.91,539) rotate(-45)" text-anchor="end" font-size="8" fill="#666">11 AM</text>
<text transform="translate(128.79,539) rotate(-45)" text-anchor="end" font-size="8" fill="#666">12 PM</text>
<text transform="translate(148.66,539) rotate(-45)" text-anchor="end" font-size="8" fill="#666">1 PM</text>
<text transform="translate(168.54,539) rotate(-45)" text-anchor="end" font-size="8" fill="#666">2 PM</text>
<text transform="translate(188.41,539) rotate(-45)" text-anchor="end" font-size="8" fill="#666">3 PM</text>
<text transform="translate(208.29,539) rotate(-45)" text-anchor="end" font-size="8" fill="#666">4 PM</text>
<text transform="translate(228.16,539) rotate(-45)" text-anchor="end" font-size="8" fill="#666">5 PM</text>
<text transform="translate(248.04,539) rotate(-45)" text-anchor="end" font-size="8" fill="#666">6 PM</text>
<text transform="translate(267.91,539) rotate(-45)" text-anchor="end" font-size="8" fill="#666">7 PM</text>
<text transform="translate(287.79,539) rotate(-45)" text-anchor="end" font-size="8" fill="#666">8 PM</text>
<text transform="translate(307.66,539) rotate(-45)" text-anchor="end" font-size="8" fill="#666">9 PM</text>
<text transform="translate(327.54,539) rotate(-45)" text-anchor="end" font-size="8" fill="#666">10 PM</text>
<text transform="translate(347.41,539) rotate(-45)" text-anchor="end" font-size="8" fill="#666">11 PM</text>
<text transform="translate(367.29,539) rotate(-45)" text-anchor="end" font-size="8" fill="#666">3/13/2021 12 AM</text>
<text transform="translate(387.16,539) rotate(-45)" text-anchor="end" font-size="8" fill="#666">1 AM</text>
<text transform="translate(407.04,539) rotate(-45)" text-anchor="end" font-size="8" fill="#666">2 AM</text>
<text transform="translate(426.91,539) rotate(-45)" text-anchor="end" font-size="8" fill="#666">3 AM</text>
<text transform="translate(446.79,539) rotate(-45)" text-anchor="end" font-size="8" fill="#666">4 AM</text>
<text transform="translate(466.66,539) rotate(-45)" text-anchor="end" font-size="8" fill="#666">5 AM</text>
<text transform="translate(486.54,539) rotate(-45)" text-anchor="end" font-size="8" fill="#666">6 AM</text>
<text transform="translate(506.41,539) rotate(-45)" text-anchor="end" font-size="8" fill="#666">7 AM</text>
<text transform="translate(526.29,539) rotate(-45)" text-anchor="end" font-size="8" fill="#666">8 AM</text>
<text transform="translate(546.16,539) rotate(-45)" text-anchor="end" font-size="8" fill="#666">9 AM</text>
</svg></div>
<div id="cc" class="abs">
  <div class="abs" style="left:0;top:0;width:166px;height:49px;background:#03467f;color:#fff;text-align:center;font-weight:bold">
    <div class="abs" style="left:0;width:166px;top:5px;font-size:10px">Current Conditions</div>
    <div class="abs" style="left:0;width:166px;top:20px;font-size:8.2px">observed at</div>
    <div class="abs" style="left:0;width:166px;top:33px;font-size:10px">Mar 13, 2021 9:00 AM (LT)</div>
  </div>
  <div class="abs" style="left:0;top:49px;width:166px;height:78px;background:#00e400;color:#000;text-align:center;font-size:13.3px;line-height:19px;padding-top:11px;-webkit-text-stroke:0.3px #000">41 AQI<br>Good<br>PM2.5</div>
  <div class="abs" style="left:0;top:134px;width:166px;text-align:center;font-size:8px;font-weight:bold;color:#222">Health Message</div>
  <div id="hm" class="abs" style="left:3px;top:147.6px;width:160px;font-size:8.0px;line-height:14.1px;color:#555">The AQI value for your community is between 0 and 50. Air quality is satisfactory and poses little or no health risk.</div>
</div>
</body></html>
